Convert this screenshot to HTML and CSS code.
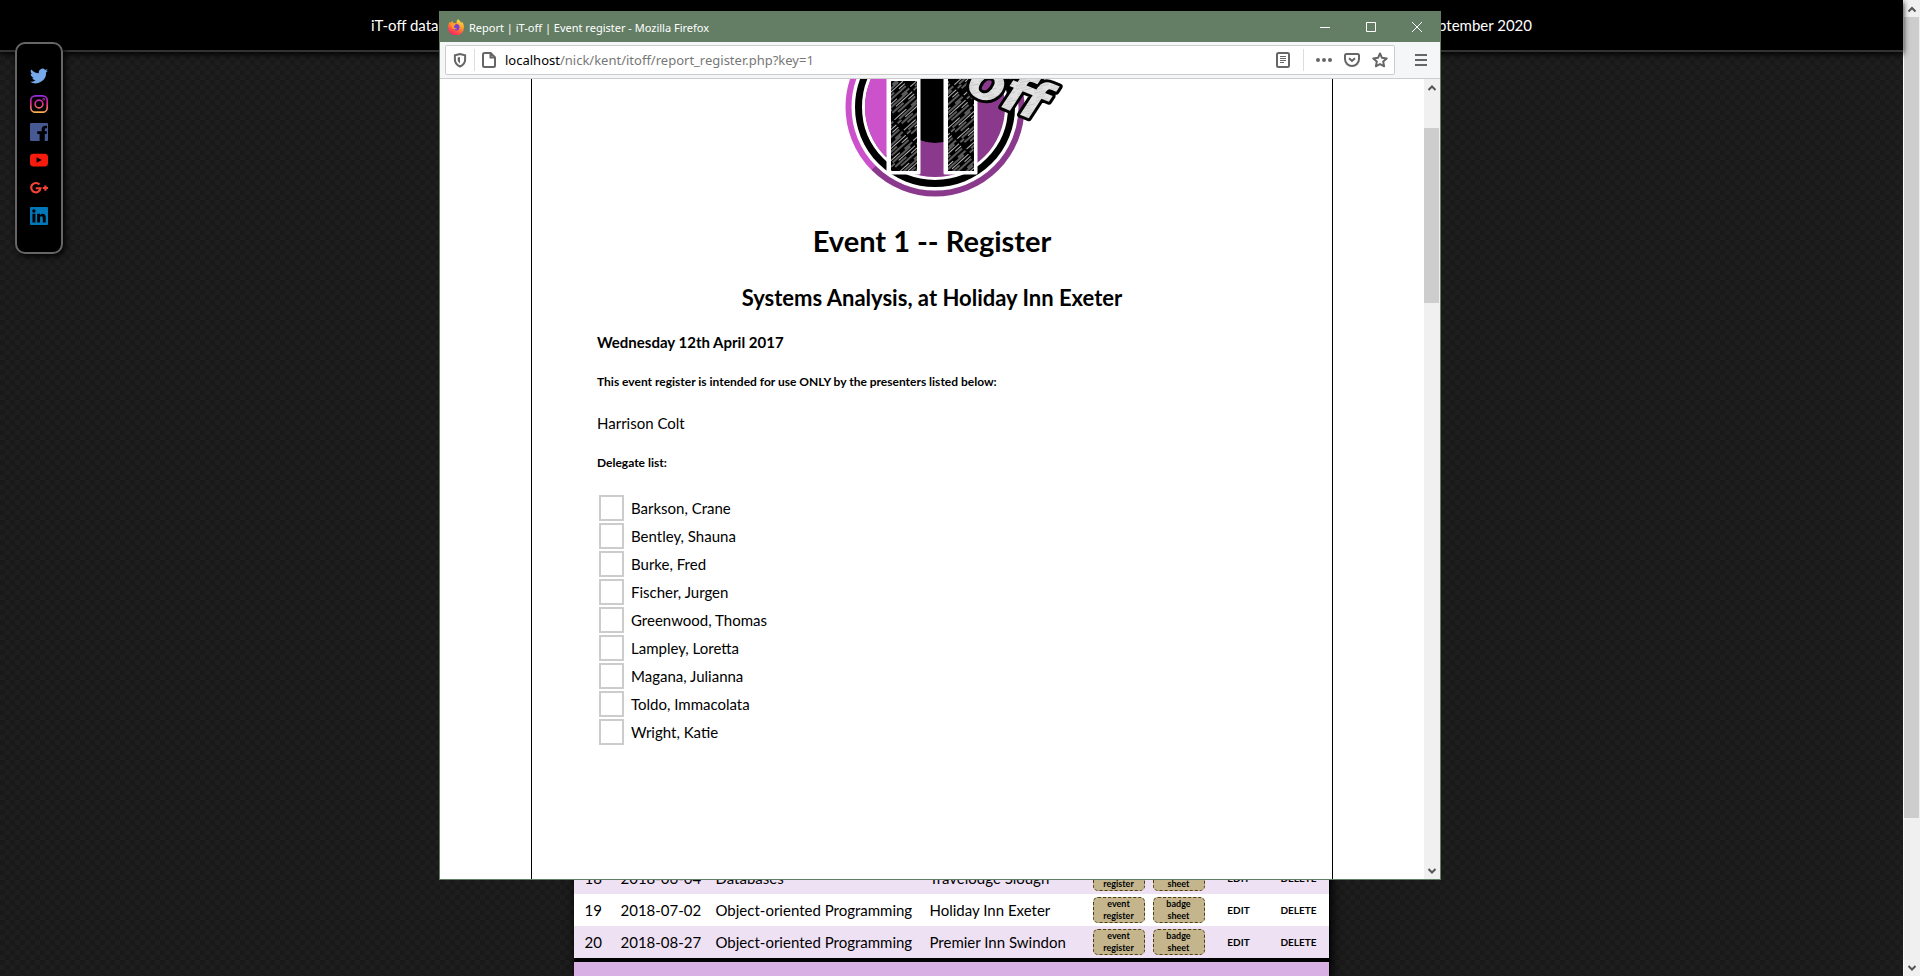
FILE: index.html
```html
<!DOCTYPE html>
<html lang="en">
<head>
<meta charset="utf-8">
<title>iT-off database</title>
<link rel="stylesheet" href="styles.css">
</head>
<body>
<div class="desktop">
  <div class="site">
    <header class="topbar"><span>iT-off database</span><span>September 2020</span></header>
    <nav class="social" aria-label="Social media">
      <a href="#" aria-label="Twitter"><svg viewBox="0 0 24 24"><path fill="#76a9ea" d="M24 4.6a10 10 0 0 1-2.8.8 5 5 0 0 0 2.1-2.7 10 10 0 0 1-3.1 1.2 4.9 4.9 0 0 0-8.4 4.5A14 14 0 0 1 1.7 3.2a4.9 4.9 0 0 0 1.5 6.5 5 5 0 0 1-2.2-.6 4.9 4.9 0 0 0 3.9 4.9 5 5 0 0 1-2.2.1 4.9 4.9 0 0 0 4.6 3.4A10 10 0 0 1 0 19.5 14 14 0 0 0 21.5 7.100A10 10 0 0 0 24 4.600z"/></svg></a>
      <a href="#" aria-label="Instagram"><svg viewBox="0 0 24 24" fill="none" stroke="url(#insta)" stroke-width="2.200"><defs><linearGradient id="insta" gradientUnits="userSpaceOnUse" x1="0" y1="0" x2="0" y2="24"><stop offset="0" stop-color="#8a2be2"/><stop offset=".45" stop-color="#e1258f"/><stop offset="1" stop-color="#fdb84a"/></linearGradient></defs><rect x="1.100" y="1.100" width="21.800" height="21.800" rx="6"/><circle cx="12" cy="12" r="5.200"/><circle cx="18.300" cy="5.700" r=".5"/></svg></a>
      <a href="#" aria-label="Facebook"><svg viewBox="0 0 24 24"><path fill="#475993" d="M1.300 0h21.400Q24 0 24 1.300v21.400q0 1.300-1.300 1.300h-3v-9.300h2.500l.4-3.600h-2.900V8.800c0-1 .4-1.800 1.500-1.800h1.500V3.800c-.4 0-1.500-.2-2.400-.2-2.800 0-4.700 1.700-4.700 4.800v2.700H9.700v3.600h3.100V24H1.300Q0 24 0 22.700V1.300Q0 0 1.300 0z"/></svg></a>
      <a href="#" aria-label="YouTube"><svg viewBox="0 0 24 24"><path fill="#f61c0d" fill-rule="evenodd" d="M4.500 3.500h15Q24 3.500 24 8v8q0 4.500-4.500 4.500h-15Q0 20.500 0 16V8q0-4.500 4.500-4.500zM8.800 8.200v7.600l7-3.800z"/></svg></a>
      <a href="#" aria-label="Google Plus"><svg viewBox="0 0 24 24" fill="none" stroke="#f44336" stroke-width="2.900"><path d="M12.500 7.400A6.200 6.200 0 1 0 14 12.300H7.700M20.500 8.500v7M17 12h7"/></svg></a>
      <a href="#" aria-label="LinkedIn"><svg viewBox="0 0 24 24"><path fill="#0077b7" fill-rule="evenodd" d="M1.300 0h21.400Q24 0 24 1.300v21.400q0 1.300-1.300 1.300H1.300Q0 24 0 22.700V1.300Q0 0 1.300 0zM3.300 9v11.700h3.900V9zM5.200 3a2.200 2.200 0 1 0 0 4.500 2.200 2.200 0 0 0 0-4.500zM9.500 9v11.700h3.800v-5.800c0-3.500 3.800-3.400 3.800 0v5.800H21v-6.800c0-5.800-6-6-7.700-2.800V9z"/></svg></a>
    </nav>
    <main class="records">
      <table class="events">
        <tbody>
          <tr><td class="num">18</td><td class="date">2018-06-04</td><td class="topic">Databases</td><td class="venue">Travelodge Slough</td><td class="tools"><button class="badge">event<br>register</button><button class="badge">badge<br>sheet</button></td><td class="edit"><a href="#">EDIT</a></td><td class="del"><a href="#">DELETE</a></td></tr>
          <tr><td class="num">19</td><td class="date">2018-07-02</td><td class="topic">Object-oriented Programming</td><td class="venue">Holiday Inn Exeter</td><td class="tools"><button class="badge">event<br>register</button><button class="badge">badge<br>sheet</button></td><td class="edit"><a href="#">EDIT</a></td><td class="del"><a href="#">DELETE</a></td></tr>
          <tr><td class="num">20</td><td class="date">2018-08-27</td><td class="topic">Object-oriented Programming</td><td class="venue">Premier Inn Swindon</td><td class="tools"><button class="badge">event<br>register</button><button class="badge">badge<br>sheet</button></td><td class="edit"><a href="#">EDIT</a></td><td class="del"><a href="#">DELETE</a></td></tr>
        </tbody>
      </table>
      <div class="records-foot"></div>
    </main>
  </div>
  <div class="scrollbar outer">
    <svg class="arrow" viewBox="0 0 16 17"><path d="M4.500 11.500 8 8l3.500 3.500"/></svg>
    <div class="track"><div class="thumb"></div></div>
    <svg class="arrow" viewBox="0 0 16 17"><path d="M4.500 7 8 10.500 11.500 7"/></svg>
  </div>

  <section class="window" aria-label="Report window">
    <div class="titlebar">
      <svg class="fox" viewBox="0 0 16 16"><defs><linearGradient id="fire" x1="0.800" y1="0" x2="0.300" y2="1"><stop offset="0" stop-color="#fff04a"/><stop offset=".4" stop-color="#ff9a2a"/><stop offset=".75" stop-color="#ff4a4a"/><stop offset="1" stop-color="#f0206a"/></linearGradient></defs><path fill="url(#fire)" d="M10.200 0c1 1.700 2.500 2.500 3.400 4 .4-.4.300-1 .2-1.400 1.600 2 2.300 4 2.100 6.200A7.900 7.900 0 0 1 .1 8.500C0 6 .8 4.200 1.900 2.800v1.300C3 3 4 2.400 5.200 2.300 4.900 3 5 3.500 5.400 4c1.400-.2 2.600 0 3.400.6C8.200 3 8.700 1.200 10.200 0z"/><circle cx="8.200" cy="8.200" r="3.200" fill="#7340d8"/><path fill="#ff9a2a" d="M2 4.200c2 .3 3.700.9 5.600 1.100.1 1-.8 1.300-1.700 1.700.1 2 1.500 2.600 3.300 2.100C8 11 4.500 11 4 8z"/></svg>
      <span class="caption">Report | iT-off | Event register - Mozilla Firefox</span>
      <div class="controls">
        <button aria-label="Minimize"><svg viewBox="0 0 12 12"><path d="M1 6.500h10"/></svg></button>
        <button aria-label="Maximize"><svg viewBox="0 0 12 12"><path d="M1.500 1.500h9v9h-9z"/></svg></button>
        <button aria-label="Close"><svg viewBox="0 0 12 12"><path d="M1 1l10 10M11 1 1 11"/></svg></button>
      </div>
    </div>
    <div class="toolbar">
      <div class="urlbar">
        <svg class="ico" viewBox="0 0 16 16"><path d="M8 2 2.900 3.200v4.300c0 3.400 1.800 5.600 5.100 7 3.300-1.400 5.100-3.600 5.100-7V3.200z"/><path class="solid" d="M8 5 5.700 5.600v2c0 1.800.8 2.900 2.300 3.800z"/></svg>
        <span class="sep"></span>
        <svg class="ico" viewBox="0 0 16 16"><path d="M3.500 1h6.200L14 5.300v8.200q0 1.500-1.500 1.500h-9Q2 15 2 13.500v-11Q2 1 3.500 1zM9.500 1v4.500H14"/></svg>
        <p class="address">localhost<span>/nick/kent/itoff/report_register.php?key=1</span></p>
        <svg class="ico" viewBox="0 0 16 16"><rect x="2" y="1" width="12" height="14" rx="1.500"/><path class="thin" d="M5 4.500h6M5 6.500h6M5 8.500h6M5 10.500h4"/></svg>
        <span class="sep wide"></span>
        <svg class="ico" viewBox="0 0 16 16"><g class="solid"><circle cx="2" cy="8" r="2"/><circle cx="8" cy="8" r="2"/><circle cx="14" cy="8" r="2"/></g></svg>
        <svg class="ico gap" viewBox="0 0 16 16"><path d="M2.500 2h11Q15 2 15 3.500V7A7 7 0 0 1 1 7V3.500Q1 2 2.500 2zM5 6.200 8 9l3-2.800"/></svg>
        <svg class="ico gap" viewBox="0 0 16 16"><path stroke-linejoin="round" d="m8 1.500 2 4.300 4.700.6-3.500 3.200.9 4.700L8 12l-4.100 2.300.9-4.700L1.300 6.400 6 5.800z"/></svg>
      </div>
      <button class="menu" aria-label="Open menu"><svg class="ico" viewBox="0 0 16 16"><path d="M2 3h12M2 8h12M2 13h12"/></svg></button>
    </div>
    <div class="viewport">
      <article class="page">
        <svg class="logo" viewBox="0 0 240 118" role="img" aria-label="iT-off logo">
          <defs>
            <pattern id="scratch" width="34" height="14" patternUnits="userSpaceOnUse" patternTransform="rotate(-42)"><rect width="34" height="14" fill="#000"/><path d="M0 1.500h16M22 2h10M4 4h24M10 6.500h22M0 6.200h5M3 9h15M24 9.500h8M8 12h23" stroke="#e4e4e4" stroke-width=".8"/></pattern>
            <pattern id="steel" width="17" height="8" patternUnits="userSpaceOnUse" patternTransform="rotate(-35)"><rect width="17" height="8" fill="#e2e2e2"/><path d="M0 1h12M5 3.500h11M1 6h9" stroke="#bbb" stroke-width=".7"/></pattern>
            <linearGradient id="duo" gradientUnits="userSpaceOnUse" x1="34" y1="-62" x2="212" y2="118"><stop offset=".5" stop-color="#cc52cc"/><stop offset=".5" stop-color="#8b398c"/></linearGradient>
          </defs>
          <circle cx="123" cy="28" r="86.500" fill="#fff" stroke="url(#duo)" stroke-width="6"/>
          <circle cx="123" cy="28" r="76.500" fill="none" stroke="#000" stroke-width="7"/>
          <circle cx="123" cy="28" r="70" fill="#8b398c"/>
          <path d="M123-42A70 70 0 0 0 73 77L123 28z" fill="#cc52cc"/>
          <circle cx="123" cy="24" r="40" fill="#000"/>
          <path d="M76-10h31V94H76zM133-10h31V94h-31z" fill="#fff" stroke="#fff" stroke-width="3" stroke-linejoin="round"/>
          <path d="M79 2h26v90H79zM136-10h26V92h-26z" fill="url(#scratch)"/>
          <text class="off" transform="translate(152 13) rotate(22)" font-size="54">off</text>
        </svg>
        <h1>Event 1 -- Register</h1>
        <h2>Systems Analysis, at Holiday Inn Exeter</h2>
        <h4>Wednesday 12th April 2017</h4>
        <h5>This event register is intended for use ONLY by the presenters listed below:</h5>
        <p>Harrison Colt</p>
        <h5>Delegate list:</h5>
        <ul class="delegates">
          <li><label><input type="checkbox">Barkson, Crane</label></li>
          <li><label><input type="checkbox">Bentley, Shauna</label></li>
          <li><label><input type="checkbox">Burke, Fred</label></li>
          <li><label><input type="checkbox">Fischer, Jurgen</label></li>
          <li><label><input type="checkbox">Greenwood, Thomas</label></li>
          <li><label><input type="checkbox">Lampley, Loretta</label></li>
          <li><label><input type="checkbox">Magana, Julianna</label></li>
          <li><label><input type="checkbox">Toldo, Immacolata</label></li>
          <li><label><input type="checkbox">Wright, Katie</label></li>
        </ul>
      </article>
      <div class="scrollbar inner">
        <svg class="arrow" viewBox="0 0 16 17"><path d="M4.500 11 8 7.500 11.500 11"/></svg>
        <div class="track"><div class="thumb"></div></div>
        <svg class="arrow" viewBox="0 0 16 17"><path d="M4.500 7 8 10.500 11.500 7"/></svg>
      </div>
    </div>
  </section>
</div>
</body>
</html>
```
FILE: styles.css
```css
* { box-sizing: border-box; }

body {
  margin: 0;
  font-family: Lato, Carlito, Calibri, sans-serif;
  font-size: 15px;
  color: #000;
}

button { font: inherit; color: inherit; background: none; border: 0; padding: 0; }
a { color: inherit; text-decoration: none; }

.desktop {
  position: relative;
  display: flex;
  height: 100vh;
  overflow: hidden;
}

.site {
  position: relative;
  flex: 1;
  display: flex;
  flex-direction: column;
  background: repeating-conic-gradient(#1e1e1e 0 25%, #191919 0 50%) 0 0 / 10px 10px;
}

.topbar {
  height: 52px;
  padding: 0 371px;
  display: flex;
  justify-content: space-between;
  align-items: center;
  background: #000;
  border-bottom: 2px solid #333;
  box-shadow: 0 2px 6px #000;
  color: #fff;
}

.social {
  position: absolute;
  left: 15px;
  top: 42px;
  width: 48px;
  padding: 23px 0 27px;
  display: flex;
  flex-direction: column;
  align-items: center;
  gap: 10px;
  background: #000;
  border: 2px solid #666;
  border-radius: 10px;
  box-shadow: 2px 2px 6px #000;
}
.social a, .social svg { display: block; width: 18px; height: 18px; }

/* event table */
.records {
  width: 756px;
  margin: auto auto 0;
  padding-right: 1px;
  background: #000;
  box-shadow: 2px 2px 10px #000;
}
.events { width: 100%; border-collapse: collapse; table-layout: fixed; background: #fff; }
.events tr { height: 32px; }
.events tr:nth-child(odd) { background: #efe1f4; }
.events td { padding: 0; white-space: nowrap; }
.events .num { width: 47px; padding-left: 11px; }
.events .date { width: 95px; }
.events .topic { width: 214px; }
.events .venue { width: 163px; }
.events .tools { width: 120px; }
.events .edit { width: 52px; text-align: center; font-size: 10px; font-weight: 700; }
.events .del { padding-left: 4px; text-align: center; font-size: 10px; font-weight: 700; }
.badge {
  width: 52px;
  height: 26px;
  margin-right: 8px;
  vertical-align: middle;
  background: #c4b58d;
  border: 1px dashed #4d3d10;
  border-radius: 5px;
  font-size: 9px;
  font-weight: 700;
  line-height: 12px;
}
.records-foot { height: 18px; border-top: 4px solid #000; background: #d8b0e4; }

/* scrollbars */
.scrollbar { width: 16px; display: flex; flex-direction: column; background: #f0f0f0; }
.scrollbar .arrow { height: 17px; fill: none; stroke: #555; stroke-width: 2; }
.scrollbar .track { flex: 1; display: flex; flex-direction: column; }
.scrollbar .thumb { background: #cdcdcd; margin-right: 1px; }
.outer { width: 17px; border-left: 1px solid #fff; }
.outer .thumb { height: 85%; }
.inner .track { padding-top: 32px; }
.inner .thumb { height: 175px; }

/* browser window floating over the site */
.window {
  position: absolute;
  left: 439px;
  top: 11px;
  width: 1002px;
  height: 869px;
  display: flex;
  flex-direction: column;
  background: #fff;
  border: 1px solid #647e65;
}
.titlebar {
  height: 30px;
  padding-left: 8px;
  display: flex;
  align-items: center;
  background: #647e65;
  color: #fff;
  font-family: "Noto Sans", "Open Sans", sans-serif;
  font-size: 11px;
}
.fox { width: 16px; height: 16px; margin-right: 5px; }
.caption { flex: 1; }
.controls { display: flex; }
.controls button { width: 46px; height: 30px; display: flex; align-items: center; justify-content: center; }
.controls svg { width: 12px; height: 12px; fill: none; stroke: #fff; stroke-width: 1; }

.toolbar {
  height: 37px;
  padding: 3px 11px 3px 5px;
  display: flex;
  align-items: center;
  background: #f5f6f7;
  border-bottom: 1px solid #ccc;
}
.urlbar {
  flex: 1;
  height: 30px;
  padding: 0 6px;
  display: flex;
  align-items: center;
  background: #fff;
  border: 1px solid #ccc;
  border-radius: 2px;
}
.ico { width: 16px; height: 16px; fill: none; stroke: #666; stroke-width: 2; }
.ico .solid { fill: #666; stroke: none; }
.ico .thin { stroke-width: 1; }
.gap { margin-left: 12px; }
.sep { width: 1px; height: 22px; margin: 0 6px; background: #ddd; }
.sep.wide { margin: 0 12px; }
.address {
  flex: 1;
  margin: 0 0 0 8px;
  font-family: "Noto Sans", "Open Sans", sans-serif;
  font-size: 13px;
}
.address span { color: #777; }
.menu { width: 16px; height: 16px; margin-left: 18px; }
.menu svg { display: block; }

.viewport { flex: 1; min-height: 0; display: flex; overflow: hidden; }
.page {
  width: 802px;
  margin: 0 auto;
  padding: 0 65px;
  border: solid #000;
  border-width: 0 1px;
}
.logo { display: block; width: 240px; height: 118px; margin: 0 auto; overflow: visible; }
.off {
  font-family: "DejaVu Sans", sans-serif;
  font-weight: 700;
  font-style: italic;
  fill: url(#steel);
  stroke: #000;
  stroke-width: 6px;
  stroke-linejoin: round;
  paint-order: stroke;
}
h1, h2, h4, h5 { margin: 0; }
h1 { margin-top: 24px; font-size: 29px; line-height: 40px; text-align: center; }
h2 { margin-top: 22px; font-size: 22px; line-height: 30px; text-align: center; }
h4 { margin-top: 19px; font-size: 15px; line-height: 20px; }
h5 { margin-top: 22px; font-size: 12px; line-height: 16px; }
.page p { margin: 23px 0 0; line-height: 20px; }
.delegates { margin: 23px 0 0; padding: 0; list-style: none; }
.delegates label { height: 28px; display: flex; align-items: center; }
.delegates input {
  appearance: none;
  width: 25px;
  height: 26px;
  margin: 0 7px 0 2px;
  background: #fff;
  border: 2px solid #ccc;
}
```
